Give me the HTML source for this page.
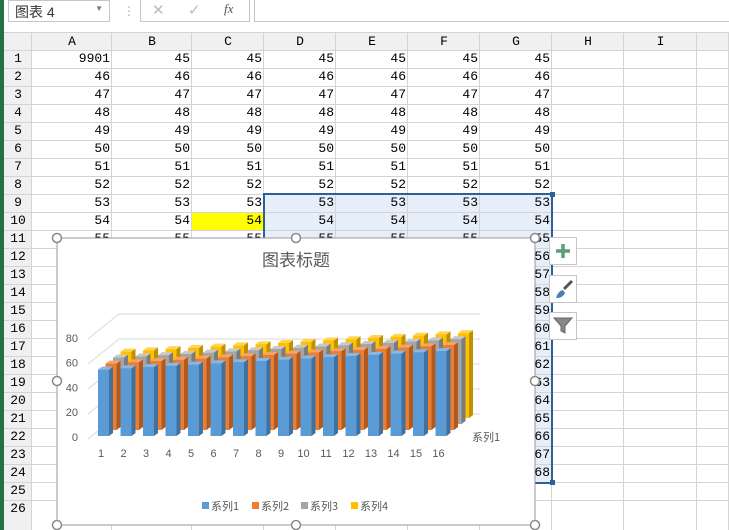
<!DOCTYPE html>
<html><head><meta charset="utf-8"><style>
*{margin:0;padding:0;box-sizing:border-box}
body{width:729px;height:530px;overflow:hidden;background:#fff;position:relative;font-family:"Liberation Mono","Noto Sans CJK SC",monospace}
#top{position:absolute;left:0;top:0;width:729px;height:33px;background:#fff;border-bottom:1px solid #d4d4d4}
.green{position:absolute;left:0;top:0;width:4px;height:530px;background:#217346;z-index:5}
.c{position:absolute;font-size:13px;color:#000;line-height:18px}
.hl{position:absolute;background:#d4d4d4}
</style></head><body>
<div class="green"></div>
<div id="top">
 <div style="position:absolute;left:8px;top:0;width:102px;height:22px;border:1px solid #c6c6c6;font:14px 'Liberation Sans','Noto Sans CJK SC',sans-serif;color:#333;padding:1px 6px">图表 4<span style="position:absolute;right:6px;top:3px;font-size:8px;color:#777">▼</span></div>
 <div style="position:absolute;left:123px;top:4px;color:#aaa;font-size:12px">⋮</div>
 <div style="position:absolute;left:140px;top:0;width:110px;height:22px;border:1px solid #c6c6c6;border-top:none"></div>
 <div style="position:absolute;left:152px;top:1px;color:#bbb;font:15px 'Liberation Sans',sans-serif">✕</div>
 <div style="position:absolute;left:188px;top:1px;color:#bbb;font:15px 'Liberation Sans',sans-serif">✓</div>
 <div style="position:absolute;left:224px;top:1px;color:#555;font:italic 13px 'Liberation Serif',serif">fx</div>
 <div style="position:absolute;left:254px;top:0;width:480px;height:22px;border:1px solid #c6c6c6;border-top:none"></div>
</div>
<div id="grid"></div>
<svg id="ch" width="729" height="530" style="position:absolute;left:0;top:0"></svg>
<script>
var cols=[32,112,192,264,336,408,480,552,624,697,729],names="ABCDEFGHI";
var g=document.getElementById('grid'),h='';
h+='<div style="position:absolute;left:4px;top:33px;width:725px;height:18px;background:#f0f0f0;border-bottom:1px solid #c6c6c6"></div>';
h+='<div style="position:absolute;left:4px;top:51px;width:28px;height:479px;background:#f0f0f0;border-right:1px solid #c6c6c6"></div>';
h+='<div style="position:absolute;left:264px;top:194px;width:288px;height:289px;background:#e6eef9"></div>';
h+='<div style="position:absolute;left:192px;top:212px;width:72px;height:18px;background:#ffff00"></div>';
for(var i=0;i<cols.length;i++){h+='<div class="hl" style="left:'+(cols[i]-1)+'px;top:33px;width:1px;height:497px"></div>';}
for(var r=0;r<=25;r++){var y=50+r*18;h+='<div class="hl" style="left:4px;top:'+y+'px;width:725px;height:1px"></div>';}
for(i=0;i<9;i++)h+='<div class="c" style="left:'+cols[i]+'px;width:'+(cols[i+1]-cols[i])+'px;top:33px;text-align:center">'+names[i]+'</div>';
for(r=1;r<=26;r++){var y=50+(r-1)*18;h+='<div class="c" style="left:4px;width:28px;text-align:center;top:'+y+'px">'+r+'</div>';
 if(r<=24)for(i=0;i<7;i++){var v=(r==1&&i==0)?9901:r+44;h+='<div class="c" style="left:'+cols[i]+'px;width:'+(cols[i+1]-cols[i]-2)+'px;top:'+y+'px;text-align:right">'+v+'</div>';}}
h+='<div style="position:absolute;left:263px;top:193px;width:290px;height:291px;border:2px solid #2e5f9a"></div>';
g.innerHTML=h;
var s='';
s+='<rect x="57" y="238" width="478" height="287" fill="#fff" stroke="#9a9a9a"/>';
s+='<text x="296" y="266" font-size="17" fill="#595959" text-anchor="middle" font-family="Noto Sans CJK SC,sans-serif">图表标题</text>';
for(var k=0;k<5;k++){var y=314+k*25;s+='<polyline points="88,'+(y+25)+' 119,'+y+' 480,'+y+'" fill="none" stroke="#d9d9d9"/>';}
var lab=['80','60','40','20','0'];
for(k=0;k<5;k++)s+='<text x="78" y="'+(342+k*24.7)+'" font-size="11" fill="#595959" text-anchor="end" font-family="Liberation Sans,sans-serif">'+lab[k]+'</text>';
var col=[['#5b9bd5','#41719c','#8ab8e6'],['#ed7d31','#ae5a21','#f4a36b'],['#a5a5a5','#7c7c7c','#c8c8c8'],['#ffc000','#bf9000','#ffd54f']];
for(var sr=3;sr>=0;sr--){for(var c=0;c<16;c++){var x=98+c*22.5+sr*7.5,b=436-sr*6,v=54+c;var ht=v*1.23,t=b-ht,w=11;
 s+='<polygon points="'+(x+w)+','+b+' '+(x+w+4)+','+(b-3)+' '+(x+w+4)+','+(t-3)+' '+(x+w)+','+t+'" fill="'+col[sr][1]+'"/>';
 s+='<polygon points="'+x+','+t+' '+(x+4)+','+(t-3)+' '+(x+w+4)+','+(t-3)+' '+(x+w)+','+t+'" fill="'+col[sr][2]+'"/>';
 s+='<rect x="'+x+'" y="'+t+'" width="'+w+'" height="'+ht+'" fill="'+col[sr][0]+'"/>';}}
for(c=0;c<16;c++)s+='<text x="'+(101+c*22.5)+'" y="457" font-size="11" fill="#595959" text-anchor="middle" font-family="Liberation Sans,sans-serif">'+(c+1)+'</text>';
s+='<text x="472" y="441" font-size="11" fill="#595959" font-family="Noto Sans CJK SC,sans-serif">系列1</text>';
var lx=[202,252,301,351];for(k=0;k<4;k++){s+='<rect x="'+lx[k]+'" y="502" width="7" height="7" fill="'+col[k][0]+'"/><text x="'+(lx[k]+9)+'" y="510" font-size="11" fill="#595959" font-family="Noto Sans CJK SC,sans-serif">系列'+(k+1)+'</text>';}
var hp=[[57,238],[296,238],[535,238],[57,381],[535,381],[57,525],[296,525],[535,525]];
hp.forEach(function(p){s+='<circle cx="'+p[0]+'" cy="'+p[1]+'" r="4.5" fill="#fff" stroke="#8a8a8a" stroke-width="1.5"/>';});
s+='<rect x="550" y="480" width="5" height="5" fill="#2e5f9a"/><rect x="550" y="192" width="5" height="5" fill="#2e5f9a"/>';
var by=[237,275,312];by.forEach(function(y){s+='<rect x="549.5" y="'+(y+.5)+'" width="27" height="27" fill="#fff" stroke="#c6c6c6"/>';});
s+='<path d="M563 244v14M556 251h14" stroke="#5c9e7a" stroke-width="3.5"/>';
s+='<path d="M572 281l-8 8" stroke="#555" stroke-width="3"/><path d="M556 298q2-7 7-8l2 3q-2 5-9 5z" fill="#4a7fb5"/>';
s+='<path d="M554 318h18l-7 8v7l-4-2v-5z" fill="#888" stroke="#666"/>';
document.getElementById('ch').innerHTML=s;
</script>
</body></html>
